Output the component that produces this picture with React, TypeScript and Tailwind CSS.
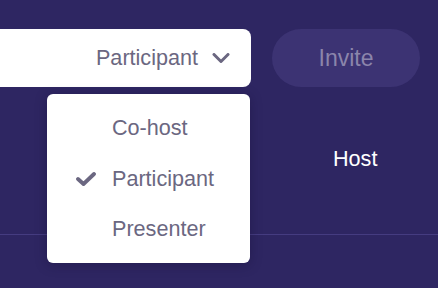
import React from 'react'

const Chevron = () => (
  <svg width="18" height="10" viewBox="0 0 18 10" fill="none">
    <path d="M2 1.5l7 7 7-7" stroke="#6b6781" strokeWidth="3" strokeLinecap="round" strokeLinejoin="round" />
  </svg>
)

const Check = () => (
  <svg width="20" height="14" viewBox="0 0 20 14" fill="none">
    <path d="M2 7l5.5 5L18 2" stroke="#6b6781" strokeWidth="3.8" strokeLinecap="round" strokeLinejoin="round" />
  </svg>
)

const roles = ['Co-host', 'Participant', 'Presenter']

const App = () => (
  <div className="relative w-[438px] h-[288px] overflow-hidden bg-[#2e2662] font-['Liberation_Sans',Arial,sans-serif]">
    <div className="flex items-center pt-[29px]">
      <div className="flex items-center justify-end gap-[14px] ml-[-30px] w-[281px] h-[58px] pr-[21px] bg-white rounded-[8px]">
        <span className="text-[21.6px] text-[#6b6781]">Participant</span>
        <Chevron />
      </div>
      <button className="ml-[21px] w-[148px] h-[58px] rounded-full bg-[#3c3373] text-[23px] text-[#8b85ab]">
        Invite
      </button>
    </div>

    <div className="flex pl-[333px] mt-[59px]">
      <span className="text-[21.6px] leading-[26px] text-white">Host</span>
    </div>

    <div className="mt-[62px] border-t border-[#453c80]" />

    <div className="absolute left-[47px] top-[94px] w-[203px] h-[169px] bg-white rounded-[6px] shadow-[0_2px_12px_rgba(20,12,50,0.35)] pt-[9px]">
      {roles.map(role => (
        <div key={role} className="flex items-center h-[50.5px]">
          <div className="w-[65px] flex justify-end pr-[16px]">
            {role === 'Participant' && <Check />}
          </div>
          <span className="text-[21.6px] text-[#6b6781]">{role}</span>
        </div>
      ))}
    </div>
  </div>
)

export default App
